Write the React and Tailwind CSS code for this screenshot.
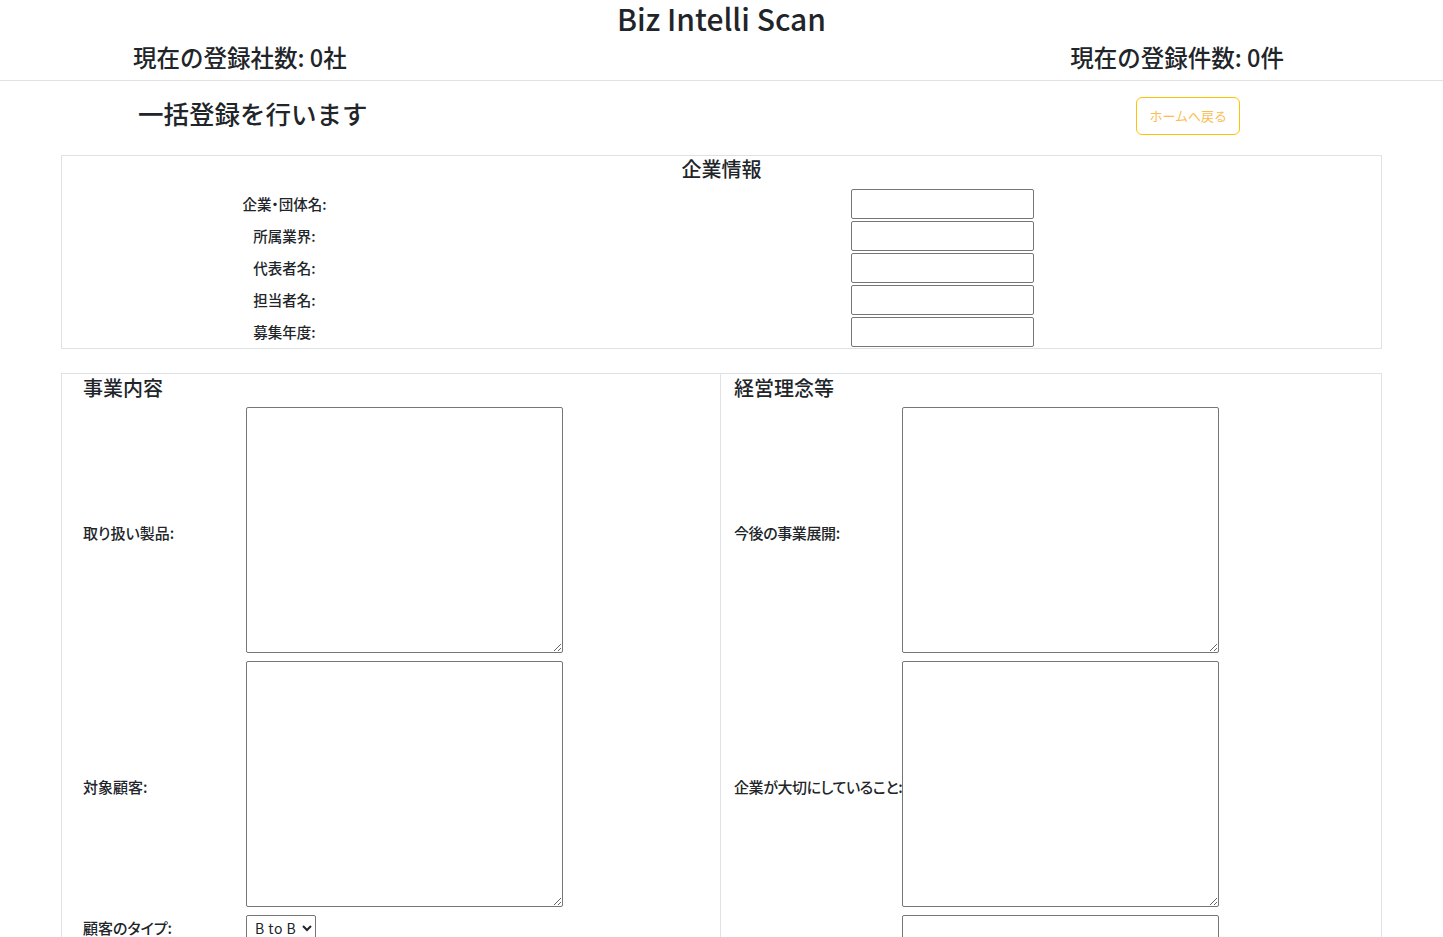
import { useState } from 'react';

const font = { fontFamily: '"Noto Sans CJK JP", "Noto Sans", sans-serif' };

const companyFields = ['企業・団体名:', '所属業界:', '代表者名:', '担当者名:', '募集年度:'];

function TextareaRow({ label, labelWidth, tight }) {
  return (
    <div className="flex items-center mb-[8px]">
      <label
        className={`${labelWidth} ${tight ? 'tracking-[-0.4px]' : ''} shrink-0 pt-[6px] text-[15px] font-medium text-[#212529] whitespace-nowrap [font-feature-settings:'palt']`}
      >
        {label}
      </label>
      <textarea className="w-[317px] h-[246px] border border-[#767676] rounded-[2px] bg-white block" />
    </div>
  );
}

export default function App() {
  const [customerType, setCustomerType] = useState('btob');

  return (
    <div className="bg-white text-[#212529] min-h-screen" style={font}>
      <header className="border-b border-[#dee2e6]">
        <h1 className="text-center text-[30px] leading-[36px] font-medium">Biz Intelli Scan</h1>
        <div className="flex justify-between items-center pl-[133px] pr-[159px] h-[44px]">
          <h4 className="text-[23.5px] font-medium">現在の登録社数: 0社</h4>
          <h4 className="text-[23.5px] font-medium">現在の登録件数: 0件</h4>
        </div>
      </header>

      <div className="flex items-start justify-between pl-[138px] pr-[203px] pt-[13px] pb-[20px]">
        <h2 className="text-[25.5px] leading-[38px] font-medium">一括登録を行います</h2>
        <button className="mt-[3px] border border-[#ffc107] rounded-[6px] text-[#fbbd52] text-[13px] leading-[20px] px-[12px] py-[8px]">
          ホームへ戻る
        </button>
      </div>

      <section className="mx-[61px] border border-[#dee2e6]">
        <h3 className="text-center text-[20px] leading-[26px] font-medium pb-[7px]">企業情報</h3>
        <div className="flex flex-col gap-[2px] pb-[1px]">
          {companyFields.map((f) => (
            <div key={f} className="flex items-center h-[30px]">
              <label className="w-[445px] text-center text-[14.5px] font-medium [font-feature-settings:'palt']">{f}</label>
              <input type="text" className="ml-[344px] w-[183px] h-[30px] border border-[#767676] rounded-[2px]" />
            </div>
          ))}
        </div>
      </section>

      <section className="mx-[61px] mt-[24px] border border-[#dee2e6] flex">
        <div className="w-[658px] pl-[21px] pt-[1px]">
          <h3 className="text-[20px] leading-[26px] font-medium mb-[6px]">事業内容</h3>
          <TextareaRow label="取り扱い製品:" labelWidth="w-[163px]" />
          <TextareaRow label="対象顧客:" labelWidth="w-[163px]" />
          <div className="flex items-center">
            <label className="w-[163px] shrink-0 text-[15px] font-medium [font-feature-settings:'palt']">顧客のタイプ:</label>
            <select
              value={customerType}
              onChange={(e) => setCustomerType(e.target.value)}
              className="h-[26px] border border-[#767676] rounded-[2px] text-[14px] tracking-[0.5px] pl-[4px] pr-[2px] bg-white"
            >
              <option value="btob">B to B</option>
              <option value="btoc">B to C</option>
            </select>
          </div>
        </div>
        <div className="flex-1 border-l border-[#dee2e6] pl-[13px] pt-[1px]">
          <h3 className="text-[20px] leading-[26px] font-medium mb-[6px]">経営理念等</h3>
          <TextareaRow label="今後の事業展開:" labelWidth="w-[168px]" tight />
          <TextareaRow label="企業が大切にしていること:" labelWidth="w-[168px]" tight />
          <TextareaRow label="" labelWidth="w-[168px]" tight />
        </div>
      </section>
    </div>
  );
}
